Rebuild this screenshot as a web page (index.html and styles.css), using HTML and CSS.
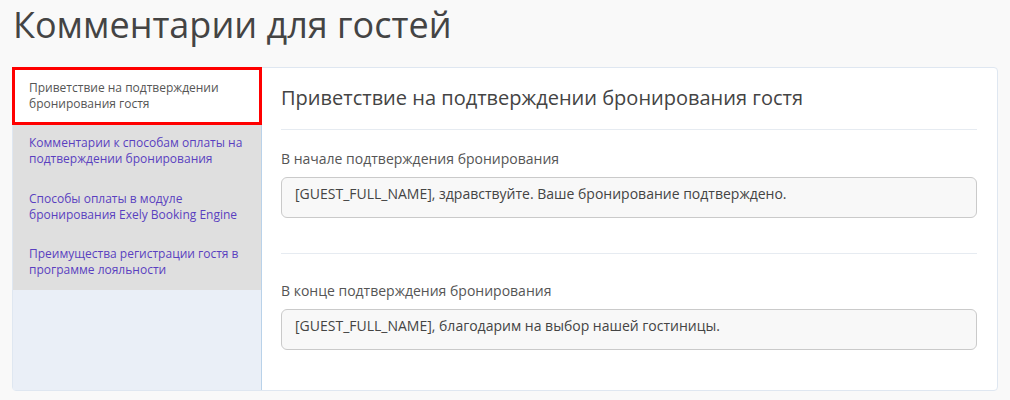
FILE: index.html
```html
<!DOCTYPE html>
<html lang="ru">
<head>
<meta charset="utf-8">
<title>Комментарии для гостей</title>
<link rel="stylesheet" href="styles.css">
</head>
<body>
<h1 class="page-title">Комментарии для гостей</h1>
<div class="card">
  <nav class="sidebar">
    <a class="menu-item active">Приветствие на подтверждении бронирования гостя</a>
    <a class="menu-item">Комментарии к способам оплаты на подтверждении бронирования</a>
    <a class="menu-item">Способы оплаты в модуле бронирования Exely Booking Engine</a>
    <a class="menu-item">Преимущества регистрации гостя в программе лояльности</a>
  </nav>
  <section class="content">
    <h2 class="section-title">Приветствие на подтверждении бронирования гостя</h2>
    <hr class="divider first">
    <div class="field">
      <label class="field-label">В начале подтверждения бронирования</label>
      <div class="field-input">[GUEST_FULL_NAME], здравствуйте. Ваше бронирование подтверждено.</div>
    </div>
    <hr class="divider second">
    <div class="field">
      <label class="field-label">В конце подтверждения бронирования</label>
      <div class="field-input">[GUEST_FULL_NAME], благодарим на выбор нашей гостиницы.</div>
    </div>
  </section>
</div>
</body>
</html>
```
FILE: styles.css
```css
html, body {
  margin: 0;
  padding: 0;
}
body {
  background: #f9f9f9;
  font-family: "Open Sans", "Noto Sans", sans-serif;
  color: #444;
  padding: 0 12px;
  height: 400px;
  overflow: hidden;
}
.page-title {
  margin: 0 0 18px 1px;
  font-size: 36px;
  font-weight: 400;
  line-height: 49px;
  color: #444;
}
.card {
  display: flex;
  background: #fff;
  border: 1px solid #dfe7f1;
  border-radius: 4px;
  height: 322px;
}
.sidebar {
  width: 248px;
  flex: none;
  background: #eaeff7;
  border-right: 1px solid #b9d2e9;
  display: flex;
  flex-direction: column;
}
.menu-item {
  display: block;
  background: #dfdfdf;
  padding: 11.5px 10px 12px 16px;
  font-size: 12px;
  line-height: 16px;
  color: #5a3fc0;
}
.menu-item.active {
  background: #fff;
  color: #555;
  outline: 3px solid #ff0000;
  outline-offset: -2px;
  position: relative;
}
.content {
  flex: 1;
  padding: 18px 20px 0 19px;
}
.section-title {
  margin: 0;
  font-size: 20px;
  font-weight: 400;
  line-height: 24px;
  color: #444;
}
.divider {
  border: 0;
  border-top: 1px solid #e6ebf1;
  margin: 0;
}
.divider.first {
  margin: 19px 0 19px;
}
.divider.second {
  margin: 35px 0 27px;
}
.field-label {
  display: block;
  font-size: 14px;
  line-height: 20px;
  color: #555;
  margin-bottom: 8px;
}
.field-input {
  border: 1px solid #cacaca;
  border-radius: 6px;
  background: #f8f8f8;
  padding: 6px 13px 13px;
  font-size: 14px;
  line-height: 20px;
  color: #444;
}
```
